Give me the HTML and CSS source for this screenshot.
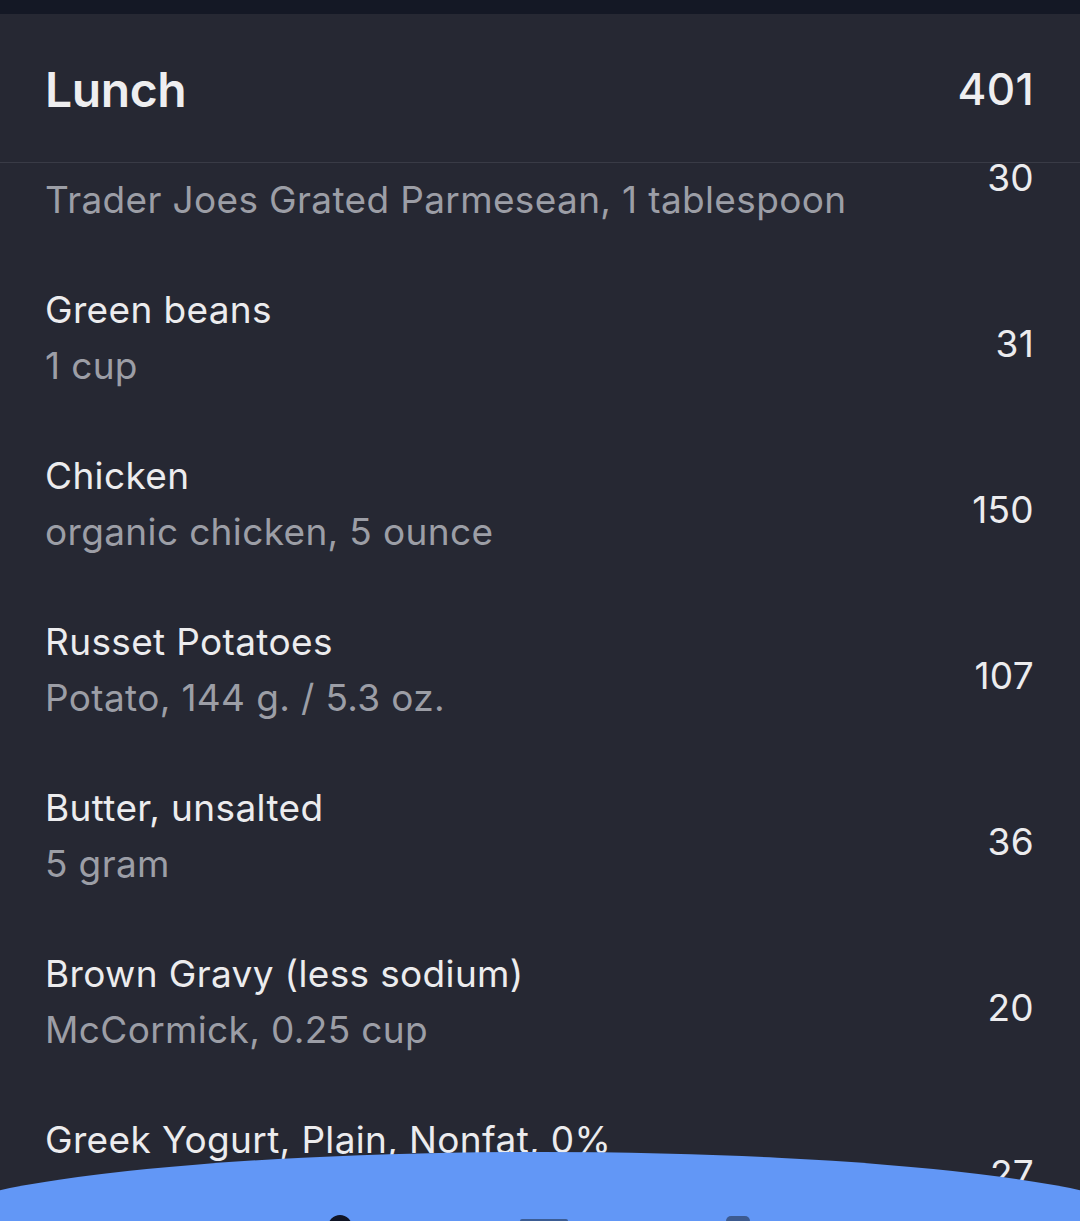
FILE: index.html
```html
<!DOCTYPE html>
<html lang="en">
<head>
<meta charset="utf-8">
<title>Lunch</title>
<link rel="stylesheet" href="styles.css">
</head>
<body>
<div class="screen">
  <div class="status-strip"></div>
  <header class="meal-header">
    <h1 class="meal-title">Lunch</h1>
    <span class="meal-total">401</span>
  </header>
  <ul class="food-list">
    <li class="food-row">
      <div class="food-text">
        <div class="food-name"></div>
        <div class="food-detail">Trader Joes Grated Parmesean, 1 tablespoon</div>
      </div>
      <span class="food-cal">30</span>
    </li>
    <li class="food-row">
      <div class="food-text">
        <div class="food-name">Green beans</div>
        <div class="food-detail">1 cup</div>
      </div>
      <span class="food-cal">31</span>
    </li>
    <li class="food-row">
      <div class="food-text">
        <div class="food-name">Chicken</div>
        <div class="food-detail">organic chicken, 5 ounce</div>
      </div>
      <span class="food-cal">150</span>
    </li>
    <li class="food-row">
      <div class="food-text">
        <div class="food-name">Russet Potatoes</div>
        <div class="food-detail">Potato, 144 g. / 5.3 oz.</div>
      </div>
      <span class="food-cal">107</span>
    </li>
    <li class="food-row">
      <div class="food-text">
        <div class="food-name">Butter, unsalted</div>
        <div class="food-detail">5 gram</div>
      </div>
      <span class="food-cal">36</span>
    </li>
    <li class="food-row">
      <div class="food-text">
        <div class="food-name">Brown Gravy (less sodium)</div>
        <div class="food-detail">McCormick, 0.25 cup</div>
      </div>
      <span class="food-cal">20</span>
    </li>
    <li class="food-row">
      <div class="food-text">
        <div class="food-name">Greek Yogurt, Plain, Nonfat, 0%</div>
        <div class="food-detail"></div>
      </div>
      <span class="food-cal">27</span>
    </li>
  </ul>
  <nav class="tab-bar">
    <div class="tab-icons">
      <span class="tab-icon tab-icon--dot"></span>
      <span class="tab-icon tab-icon--bar"></span>
      <span class="tab-icon tab-icon--square"></span>
    </div>
  </nav>
</div>
</body>
</html>
```
FILE: styles.css
```css
* { box-sizing: border-box; }
html, body {
  margin: 0;
  padding: 0;
  background: #262833;
}
body {
  font-family: "Inter", "Noto Sans", sans-serif;
  color: #ececee;
}
.screen {
  position: relative;
  width: 1080px;
  height: 1221px;
  overflow: hidden;
  background: #262833;
}
.status-strip {
  height: 14px;
  background: #141825;
}
.meal-header {
  position: relative;
  z-index: 2;
  height: 149px;
  display: flex;
  align-items: center;
  justify-content: space-between;
  padding: 0 46px 0 45px;
  background: #262833;
  border-bottom: 1px solid #393b46;
}
.meal-title {
  margin: 0;
  font-size: 48px;
  font-weight: 600;
  letter-spacing: -0.4px;
  color: #eeeef0;
  padding-top: 2px;
}
.meal-total {
  font-size: 44px;
  font-weight: 500;
  letter-spacing: 0.3px;
  color: #eeeef0;
  padding-top: 2px;
}
.food-list {
  list-style: none;
  margin: -74px 0 0 0;
  padding: 0;
}
.food-row {
  display: flex;
  align-items: center;
  justify-content: space-between;
  height: 166px;
  padding: 0 46px 0 45px;
}
.food-text {
  display: flex;
  flex-direction: column;
}
.food-name,
.food-detail {
  height: 56px;
  line-height: 56px;
  font-size: 37px;
  letter-spacing: 0.35px;
  white-space: nowrap;
}
.food-name { color: #ececee; }
.food-detail { color: #9c9ea6; }
.food-cal {
  font-size: 37px;
  letter-spacing: 0.3px;
  color: #ececee;
  padding-top: 10px;
}
.tab-bar {
  position: absolute;
  z-index: 3;
  left: -80px;
  top: 1152px;
  width: 1240px;
  height: 150px;
  border-radius: 50%;
  background: #6297f6;
}
.tab-icons {
  display: flex;
  align-items: flex-start;
  padding: 63px 0 0 408px;
}
.tab-icon { display: block; }
.tab-icon--dot {
  width: 24px;
  height: 24px;
  border-radius: 50%;
  background: #0f1426;
}
.tab-icon--bar {
  width: 48px;
  height: 10px;
  margin: 4px 0 0 168px;
  border-radius: 2px;
  background: #3b5c94;
}
.tab-icon--square {
  width: 24px;
  height: 24px;
  margin: 1px 0 0 158px;
  border-radius: 5px;
  background: #3c5a90;
}
```
